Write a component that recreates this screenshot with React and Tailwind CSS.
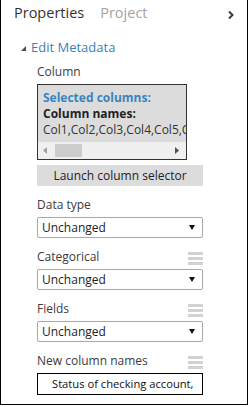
import React from "react";

function Hamburger() {
  return (
    <div className="flex flex-col gap-[2px] w-[15px]">
      <div className="h-[3px] bg-[#d2d2d2]" />
      <div className="h-[3px] bg-[#d2d2d2]" />
      <div className="h-[3px] bg-[#d2d2d2]" />
    </div>
  );
}

function Dropdown({ value }) {
  return (
    <div className="mt-[4px] h-[21px] w-[166px] border border-[#a9a9a9] rounded-[2px] flex items-center justify-between pl-[4px] pr-[7px] bg-white">
      <span className="text-[12px] leading-[19px] text-[#1e1e1e]">{value}</span>
      <svg width="6" height="5" viewBox="0 0 6 5">
        <path d="M0 0 L6 0 L3 5 Z" fill="#111" />
      </svg>
    </div>
  );
}

function Label({ children, menu, mt = "mt-[11px]" }) {
  return (
    <div className={`${mt} flex items-end justify-between w-[166px] h-[16px]`}>
      <span className="text-[12px] leading-[16px] text-[#3c3c3c]">{children}</span>
      {menu ? <Hamburger /> : null}
    </div>
  );
}

export default function App() {
  return (
    <div className="w-[248px] h-[405px] border-l border-r border-b border-black bg-white font-['Open_Sans',sans-serif] relative">
      {/* header */}
      <div className="pt-[3px] pl-[13px] pr-[13px] flex items-start justify-between">
        <div className="flex text-[14.5px] leading-[20px]">
          <span className="text-[#333]">Properties</span>
          <span className="ml-[16px] text-[#a3a3a3]">Project</span>
        </div>
        <svg width="6" height="8" viewBox="0 0 6 8" className="mt-[8px]">
          <path d="M1 0.5 L4.5 4 L1 7.5" fill="none" stroke="#3a3a3a" strokeWidth="2" />
        </svg>
      </div>

      {/* section */}
      <div className="mt-[15px] pl-[20px] flex items-center h-[18px]">
        <svg width="5" height="5" viewBox="0 0 5 5" className="mt-[2px]">
          <path d="M5 0 L5 5 L0 5 Z" fill="#4a4a4a" />
        </svg>
        <span className="ml-[5px] text-[13px] leading-[18px] text-[#3a7fb6]">Edit Metadata</span>
      </div>

      <div className="pl-[36px] flex flex-col">
        <Label mt="mt-[8px]">Column</Label>

        {/* selected columns box */}
        <div className="mt-[4px] w-[150px] h-[76px] border border-[#333] bg-[#dcdcdc] flex flex-col overflow-hidden">
          <div className="h-[57px] pt-[5px] pl-[5px] text-[12px] leading-[16px] whitespace-nowrap overflow-hidden">
            <div className="font-bold text-[#3a85bd]">Selected columns:</div>
            <div className="font-bold text-[#222]">Column names:</div>
            <div className="text-[#333]">Col1,Col2,Col3,Col4,Col5,Col6,Col7</div>
          </div>
          <div className="h-[17px] bg-[#f0f0f0] flex items-center">
            <svg width="4" height="7" viewBox="0 0 4 7" className="ml-[5px]">
              <path d="M4 0 L0 3.5 L4 7 Z" fill="#a0a0a0" />
            </svg>
            <div className="ml-[8px] w-[27px] h-[13px] bg-[#cdcdcd]" />
            <div className="flex-1" />
            <svg width="4" height="7" viewBox="0 0 4 7" className="mr-[7px]">
              <path d="M0 0 L4 3.5 L0 7 Z" fill="#505050" />
            </svg>
          </div>
        </div>

        <div className="mt-[5px] w-[166px] h-[21px] bg-[#dcdcdc] flex items-center justify-center text-[12px] leading-[21px] text-[#222]">
          Launch column selector
        </div>

        <Label>Data type</Label>
        <Dropdown value="Unchanged" />

        <Label menu>Categorical</Label>
        <Dropdown value="Unchanged" />

        <Label menu>Fields</Label>
        <Dropdown value="Unchanged" />

        <Label menu>New column names</Label>
        <div className="mt-[4px] w-[166px] h-[22px] border border-black flex items-center pl-[14px] overflow-hidden whitespace-nowrap">
          <span className="text-[11.2px] leading-[20px] text-[#111]">Status of checking account,</span>
        </div>
      </div>
    </div>
  );
}
